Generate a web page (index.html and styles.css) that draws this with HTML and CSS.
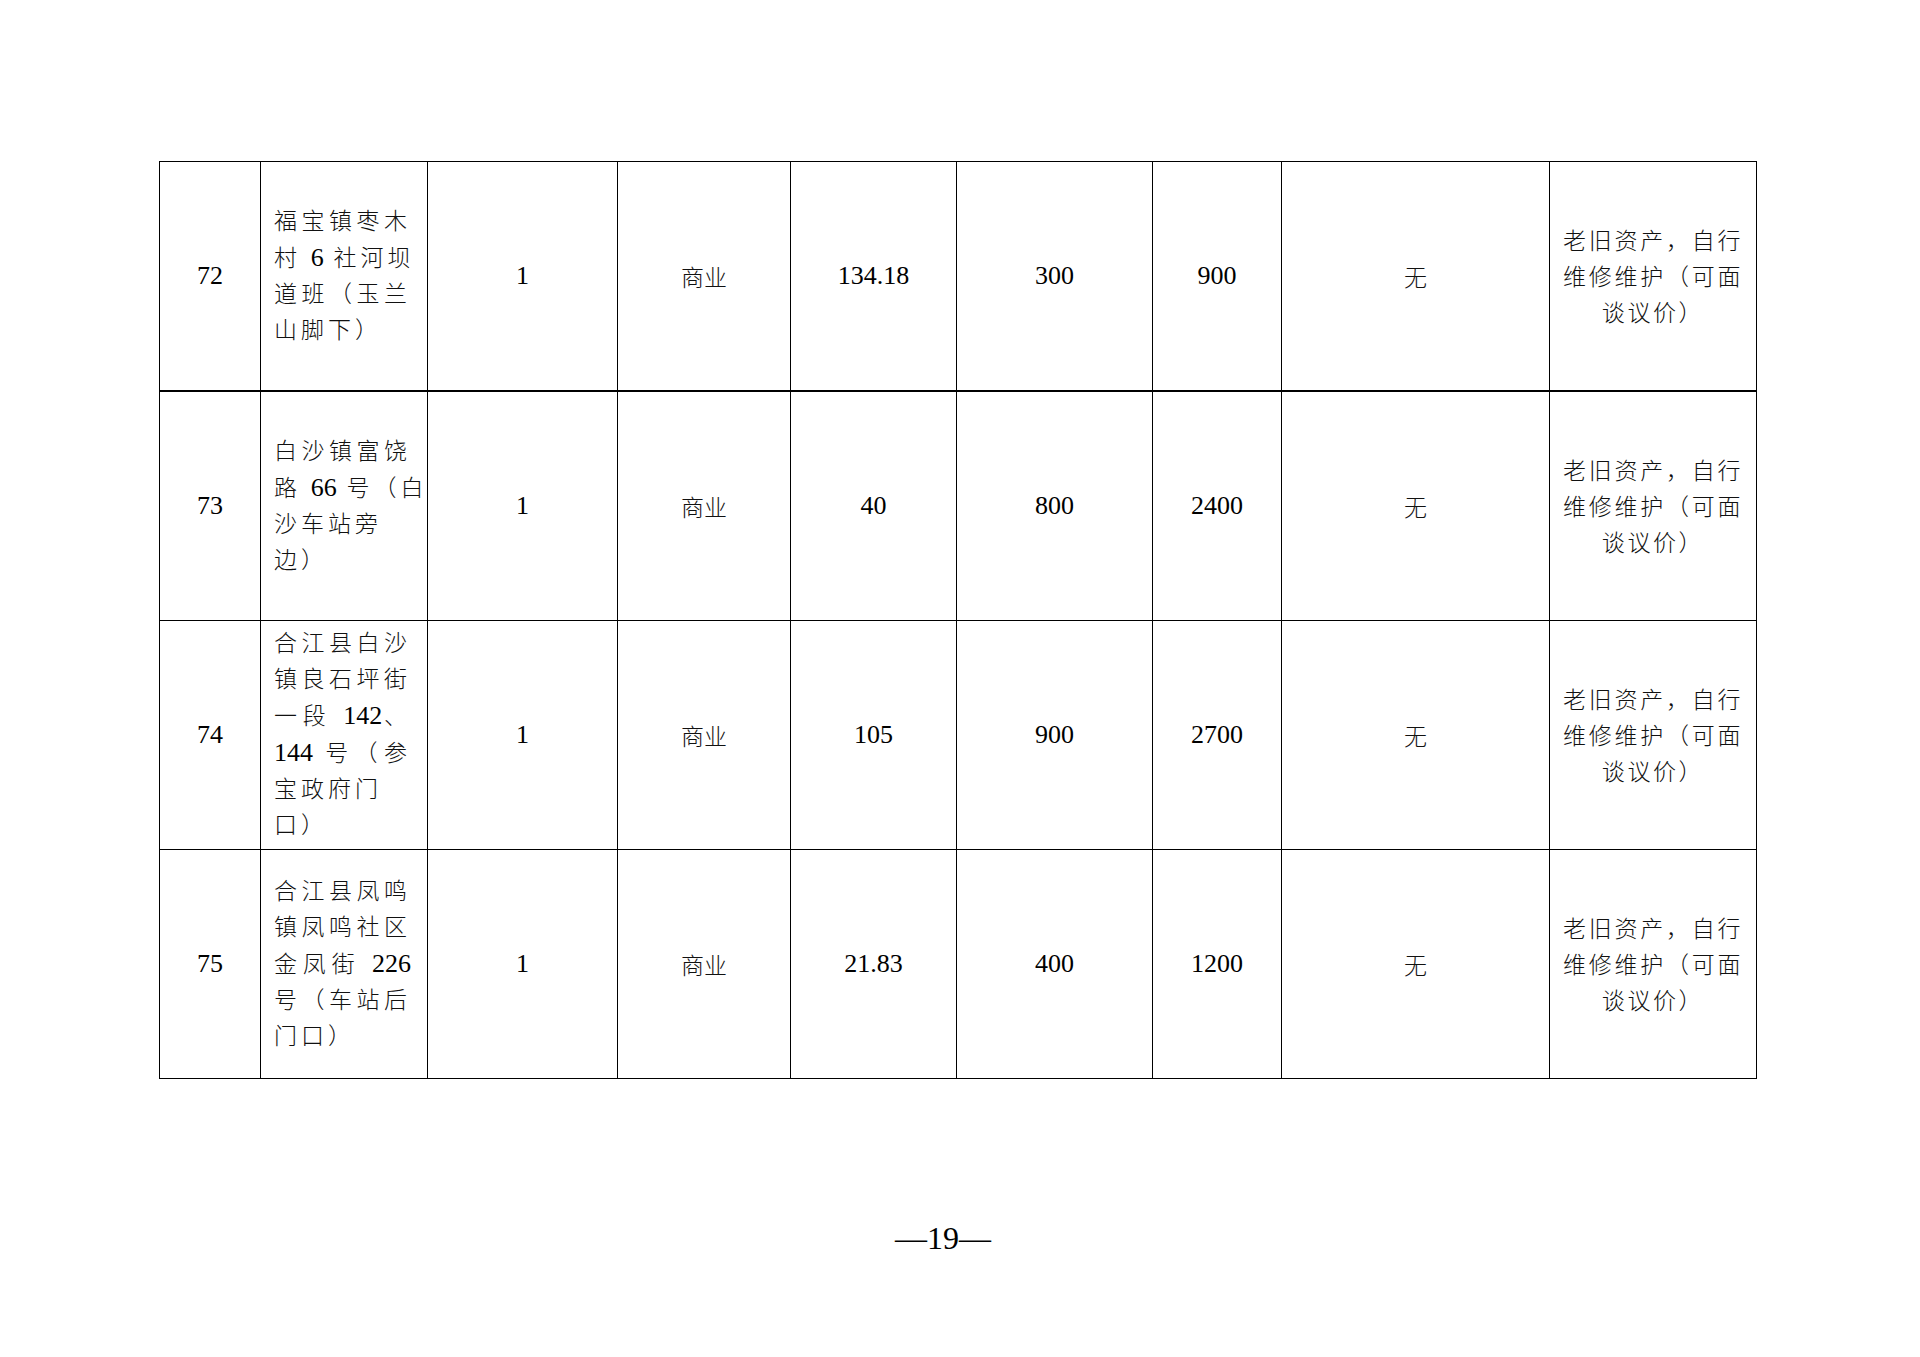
FILE: index.html
```html
<!DOCTYPE html>
<html lang="zh-CN">
<head>
<meta charset="utf-8">
<title>第19页</title>
<link rel="stylesheet" href="styles.css">
</head>
<body>
<div class="page">
  <table class="sheet">
    <colgroup>
      <col class="c1"><col class="c2"><col class="c3"><col class="c4"><col class="c5">
      <col class="c6"><col class="c7"><col class="c8"><col class="c9">
    </colgroup>
    <tbody>
      <tr class="first">
        <td class="num">72</td>
        <td class="addr"><div class="lines">
          <span class="ln j">福宝镇枣木</span>
          <span class="ln j">村 <span class="n">6</span> 社河坝</span>
          <span class="ln j">道班（玉兰</span>
          <span class="ln">山脚下）</span>
        </div></td>
        <td class="num">1</td>
        <td class="cn">商业</td>
        <td class="num">134.18</td>
        <td class="num">300</td>
        <td class="num">900</td>
        <td class="cn">无</td>
        <td class="note"><div class="lines">
          <span class="ln j">老旧资产，自行</span>
          <span class="ln j">维修维护（可面</span>
          <span class="ln c">谈议价）</span>
        </div></td>
      </tr>
      <tr>
        <td class="num">73</td>
        <td class="addr"><div class="lines">
          <span class="ln j">白沙镇富饶</span>
          <span class="ln j">路 <span class="n">66</span> 号（白</span>
          <span class="ln">沙车站旁</span>
          <span class="ln">边）</span>
        </div></td>
        <td class="num">1</td>
        <td class="cn">商业</td>
        <td class="num">40</td>
        <td class="num">800</td>
        <td class="num">2400</td>
        <td class="cn">无</td>
        <td class="note"><div class="lines">
          <span class="ln j">老旧资产，自行</span>
          <span class="ln j">维修维护（可面</span>
          <span class="ln c">谈议价）</span>
        </div></td>
      </tr>
      <tr>
        <td class="num">74</td>
        <td class="addr"><div class="lines">
          <span class="ln j">合江县白沙</span>
          <span class="ln j">镇良石坪街</span>
          <span class="ln j">一段 <span class="n">142</span>、</span>
          <span class="ln j"><span class="n">144</span> 号（参</span>
          <span class="ln">宝政府门</span>
          <span class="ln">口）</span>
        </div></td>
        <td class="num">1</td>
        <td class="cn">商业</td>
        <td class="num">105</td>
        <td class="num">900</td>
        <td class="num">2700</td>
        <td class="cn">无</td>
        <td class="note"><div class="lines">
          <span class="ln j">老旧资产，自行</span>
          <span class="ln j">维修维护（可面</span>
          <span class="ln c">谈议价）</span>
        </div></td>
      </tr>
      <tr>
        <td class="num">75</td>
        <td class="addr"><div class="lines">
          <span class="ln j">合江县凤鸣</span>
          <span class="ln j">镇凤鸣社区</span>
          <span class="ln j">金凤街 <span class="n">226</span></span>
          <span class="ln j">号（车站后</span>
          <span class="ln">门口）</span>
        </div></td>
        <td class="num">1</td>
        <td class="cn">商业</td>
        <td class="num">21.83</td>
        <td class="num">400</td>
        <td class="num">1200</td>
        <td class="cn">无</td>
        <td class="note"><div class="lines">
          <span class="ln j">老旧资产，自行</span>
          <span class="ln j">维修维护（可面</span>
          <span class="ln c">谈议价）</span>
        </div></td>
      </tr>
    </tbody>
  </table>
  <div class="folio">—19—</div>
</div>
</body>
</html>
```
FILE: styles.css
```css
html, body {
  margin: 0;
  padding: 0;
  background: #ffffff;
}

body {
  font-family: "Liberation Serif", "Noto Sans CJK SC", serif;
  color: #000000;
}

.page {
  width: 1920px;
  padding-top: 161px;
}

.sheet {
  margin-left: 159px;
  width: 1597px;
  border-collapse: collapse;
  table-layout: fixed;
}

.c1 { width: 101px; }
.c2 { width: 167px; }
.c3 { width: 190px; }
.c4 { width: 173px; }
.c5 { width: 166px; }
.c6 { width: 196px; }
.c7 { width: 129px; }
.c8 { width: 268px; }
.c9 { width: 207px; }

.sheet td {
  border: 1px solid #000000;
  height: 228px;
  padding: 0;
  vertical-align: middle;
  text-align: center;
}

.sheet tr.first td {
  border-bottom: 2px solid #000000;
}

.num {
  font-family: "Liberation Serif", serif;
  font-size: 26px;
  padding-top: 2px;
}

.cn {
  font-family: "Noto Sans CJK SC", sans-serif;
  font-size: 23px;
  font-weight: 300;
  color: #111111;
}

.lines {
  font-family: "Liberation Serif", "Noto Sans CJK SC", sans-serif;
  font-size: 23px;
  font-weight: 300;
  color: #111111;
  line-height: 36px;
  letter-spacing: 4px;
}

.ln {
  display: block;
  text-align: left;
  white-space: nowrap;
}

.ln.j {
  text-align: justify;
  text-align-last: justify;
}

.ln.c {
  text-align: center;
}

.n {
  font-size: 26px;
  font-weight: 400;
  color: #000000;
  letter-spacing: 0;
}

.addr .lines {
  width: 137px;
  margin-left: 13px;
}

.note .lines {
  width: 180px;
  margin-left: 13px;
  margin-top: 3px;
  letter-spacing: 2.6px;
}

.folio {
  margin-top: 139px;
  padding-right: 34px;
  text-align: center;
  font-family: "Liberation Serif", serif;
  font-size: 32px;
  line-height: 40px;
}
```
